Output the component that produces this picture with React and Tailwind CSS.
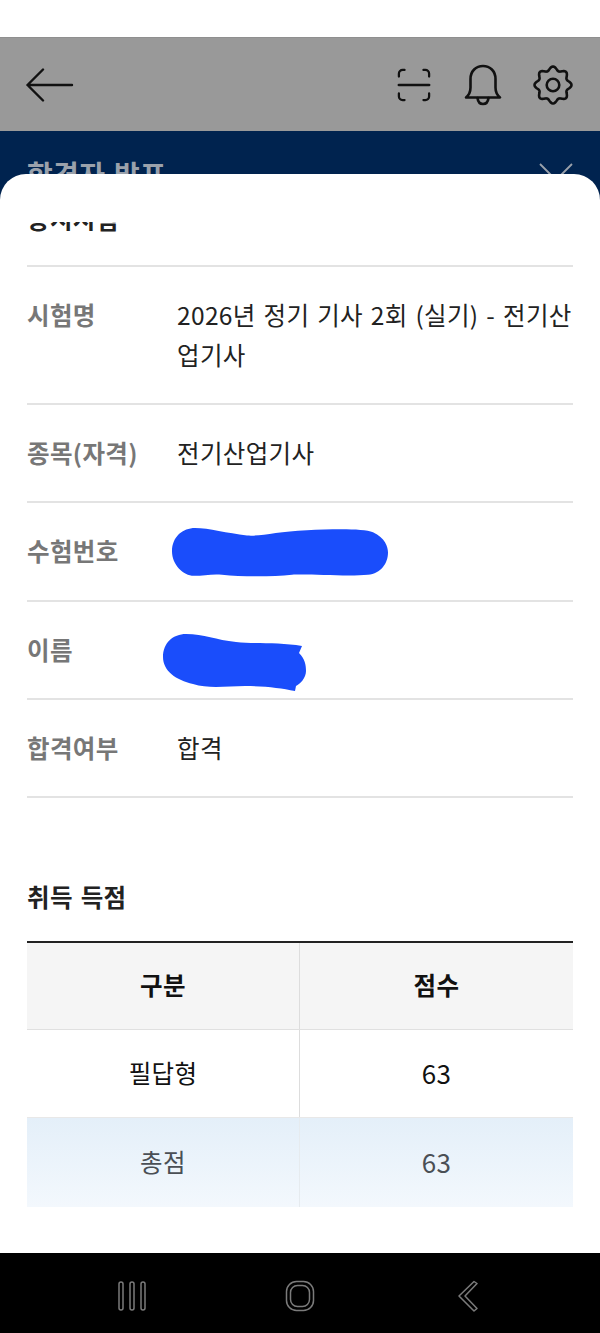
import React from 'react';

const GEAR_PATH = (() => {
  const pts = [];
  for (let i = 0; i < 96; i++) {
    const a = (i / 96) * Math.PI * 2;
    const r = 16.6 + 1.9 * Math.cos(8 * a);
    pts.push(`${(20 + r * Math.sin(a)).toFixed(2)} ${(20 - r * Math.cos(a)).toFixed(2)}`);
  }
  return `M${pts.join('L')}Z`;
})();

const BackIcon = () => (
  <svg width="48" height="34" viewBox="0 0 48 34" fill="none" stroke="#111" strokeWidth="2.4" strokeLinecap="round" strokeLinejoin="round">
    <path d="M1.5 17H46M17 1.5 1.5 17 17 32.5" />
  </svg>
);

const ScanIcon = () => (
  <svg width="34" height="34" viewBox="0 0 36 36" fill="none" stroke="#111" strokeWidth="2.4" strokeLinecap="round">
    <path d="M2 18h32" strokeWidth="2.8" />
    <path d="M8 2H6a4 4 0 0 0-4 4v3M28 2h2a4 4 0 0 1 4 4v3M8 34H6a4 4 0 0 1-4-4v-3M28 34h2a4 4 0 0 0 4-4v-3" />
  </svg>
);

const BellIcon = () => (
  <svg width="38" height="42" viewBox="0 0 38 42" fill="none" stroke="#111" strokeWidth="2.6" strokeLinecap="round" strokeLinejoin="round">
    <path d="M2 33.5c3-2.5 4.5-5.5 4.5-10V15C6.500 7 12 2 19 2s12.500 5 12.500 13v8.500c0 4.500 1.500 7.500 4.500 10Z" />
    <path d="M13.500 34c.5 4 3 6 5.500 6s5-2 5.500-6" />
  </svg>
);

const GearIcon = () => (
  <svg width="40" height="40" viewBox="0 0 40 40" fill="none" stroke="#111" strokeWidth="2.6">
    <path d={GEAR_PATH} strokeLinejoin="round" />
    <circle cx="20" cy="20" r="6.300" />
  </svg>
);

const Row = ({ label, children, className = 'pb-[28px]' }) => (
  <div className={`flex border-b-2 border-[#e3e3e3] pt-[28px] ${className}`}>
    <div className="w-[150px] shrink-0 font-bold text-[#777777]">{label}</div>
    <div className="relative min-h-[40px] flex-1 text-[#222222]">{children}</div>
  </div>
);

const NavBar = () => (
  <div className="flex h-[80px] items-center bg-black pt-[5px]">
    <div className="flex flex-1 justify-center pr-[21px]">
      <svg width="30" height="32" viewBox="0 0 30 32" fill="none" stroke="#7b7b7b" strokeWidth="1.500">
        <rect x="2" y="2" width="4" height="28" rx="2" />
        <rect x="13" y="2" width="4" height="28" rx="2" />
        <rect x="24" y="2" width="4" height="28" rx="2" />
      </svg>
    </div>
    <div className="flex justify-center">
      <svg width="30" height="32" viewBox="0 0 30 32" fill="none" stroke="#7b7b7b" strokeWidth="1.500">
        <rect x="1.500" y="1.500" width="27" height="29" rx="10" />
        <rect x="5.500" y="5.500" width="19" height="21" rx="7" />
      </svg>
    </div>
    <div className="flex flex-1 justify-center pl-[21px]">
      <svg width="22" height="32" viewBox="0 0 22 32" fill="none" stroke="#7b7b7b" strokeWidth="1.500" strokeLinejoin="round">
        <path d="M17 1.500 20 3.500 8 16l12 12.500-3 2.500L2 16Z" />
      </svg>
    </div>
  </div>
);

export default function App() {
  return (
    <div className="flex h-[1333px] w-[600px] flex-col overflow-hidden bg-white text-[24.500px] leading-[40px] tracking-[0.35px] [word-spacing:2px] [font-family:'Noto_Sans_CJK_KR',sans-serif]">
      <div className="h-[38px] shrink-0 border-b border-[#8f8f8f] bg-white" />

      <div className="flex h-[93px] shrink-0 items-center bg-[#999999] pl-[26px] pr-[27px]">
        <BackIcon />
        <div className="ml-auto flex items-center">
          <ScanIcon />
          <div className="ml-[33px]"><BellIcon /></div>
          <div className="ml-[31px]"><GearIcon /></div>
        </div>
      </div>

      <div className="flex h-[70px] shrink-0 items-start justify-between bg-[#00234f] pl-[27px] pr-[27px] pt-[23px] text-[28px] font-bold text-[#9aa1ab]">
        합격자 발표
        <svg className="mt-[9px]" width="34" height="34" viewBox="0 0 34 34" fill="none" stroke="#9aa1ab" strokeWidth="1.800">
          <path d="M1 1 33 33M33 1 1 33" />
        </svg>
      </div>

      <div className="relative -mt-[27px] flex min-h-0 flex-1 flex-col rounded-t-[26px] bg-white pt-[48px]">
        <div className="overflow-hidden px-[27px]">
          <div className="-mt-[23px]">
            <div className="border-b-2 border-[#e3e3e3] pb-[26px] font-bold text-[#222222]">응시시험</div>
            <Row label="시험명">2026년 정기 기사 2회 (실기) - 전기산업기사</Row>
            <Row label="종목(자격)">전기산업기사</Row>
            <Row label="수험번호" className="pb-[29px]">
              <svg className="absolute -left-[6px] -top-[5px]" width="218" height="53" viewBox="0 0 218 50" preserveAspectRatio="none">
                <path d="M24 2C38 2 56 7 76 9c14 1 30-4 60-5 24-1 56-2 66 2 12 5 15 14 15 19 0 10-7 20-20 21-20 2-60-1-76 0-20 2-50 2-70 0-10-1-18 1-28 1C12 47 1 36 1 24 1 10 12 2 24 2Z" fill="#1a4dfb" />
              </svg>
            </Row>
            <Row label="이름">
              <svg className="absolute -left-[15px] top-[3px]" width="146" height="58" viewBox="0 0 146 58">
                <path d="M24 1c18 0 30 6 50 8 20 2 44 0 66 4l-3 7c6 6 7 12 7 18 0 7-6 13-10 15l-1 5c-14-3-30-5-50-5-18 0-36 3-52-2C14 47 1 38 1 24 1 10 11 1 24 1Z" fill="#1a4dfb" />
              </svg>
            </Row>
            <Row label="합격여부">합격</Row>
          </div>

          <div className="mt-[79px] font-bold text-[#222222]">취득 득점</div>

          <div className="mt-[24px] border-t-2 border-[#222222] text-center">
            <div className="flex h-[87px] items-center border-b border-[#e0e0e0] bg-[#f5f5f5] font-bold text-[#111111]">
              <div className="flex h-full w-[273px] items-center justify-center border-r border-[#dddddd] pb-[2px]">구분</div>
              <div className="flex-1 pb-[2px]">점수</div>
            </div>
            <div className="flex h-[88px] items-center border-b border-[#e8e8e8] text-[#111111]">
              <div className="flex h-full w-[273px] items-center justify-center border-r border-[#dddddd] pb-[2px]">필답형</div>
              <div className="flex-1 pb-[2px] text-[26px]">63</div>
            </div>
            <div className="flex h-[89px] items-center bg-gradient-to-b from-[#e4eff9] to-[#f3f8fd] text-[#4a4f55]">
              <div className="flex h-full w-[273px] items-center justify-center border-r border-[#e6ebef] pb-[2px]">총점</div>
              <div className="flex-1 pb-[2px] text-[26px]">63</div>
            </div>
          </div>
        </div>
      </div>

      <NavBar />
    </div>
  );
}
